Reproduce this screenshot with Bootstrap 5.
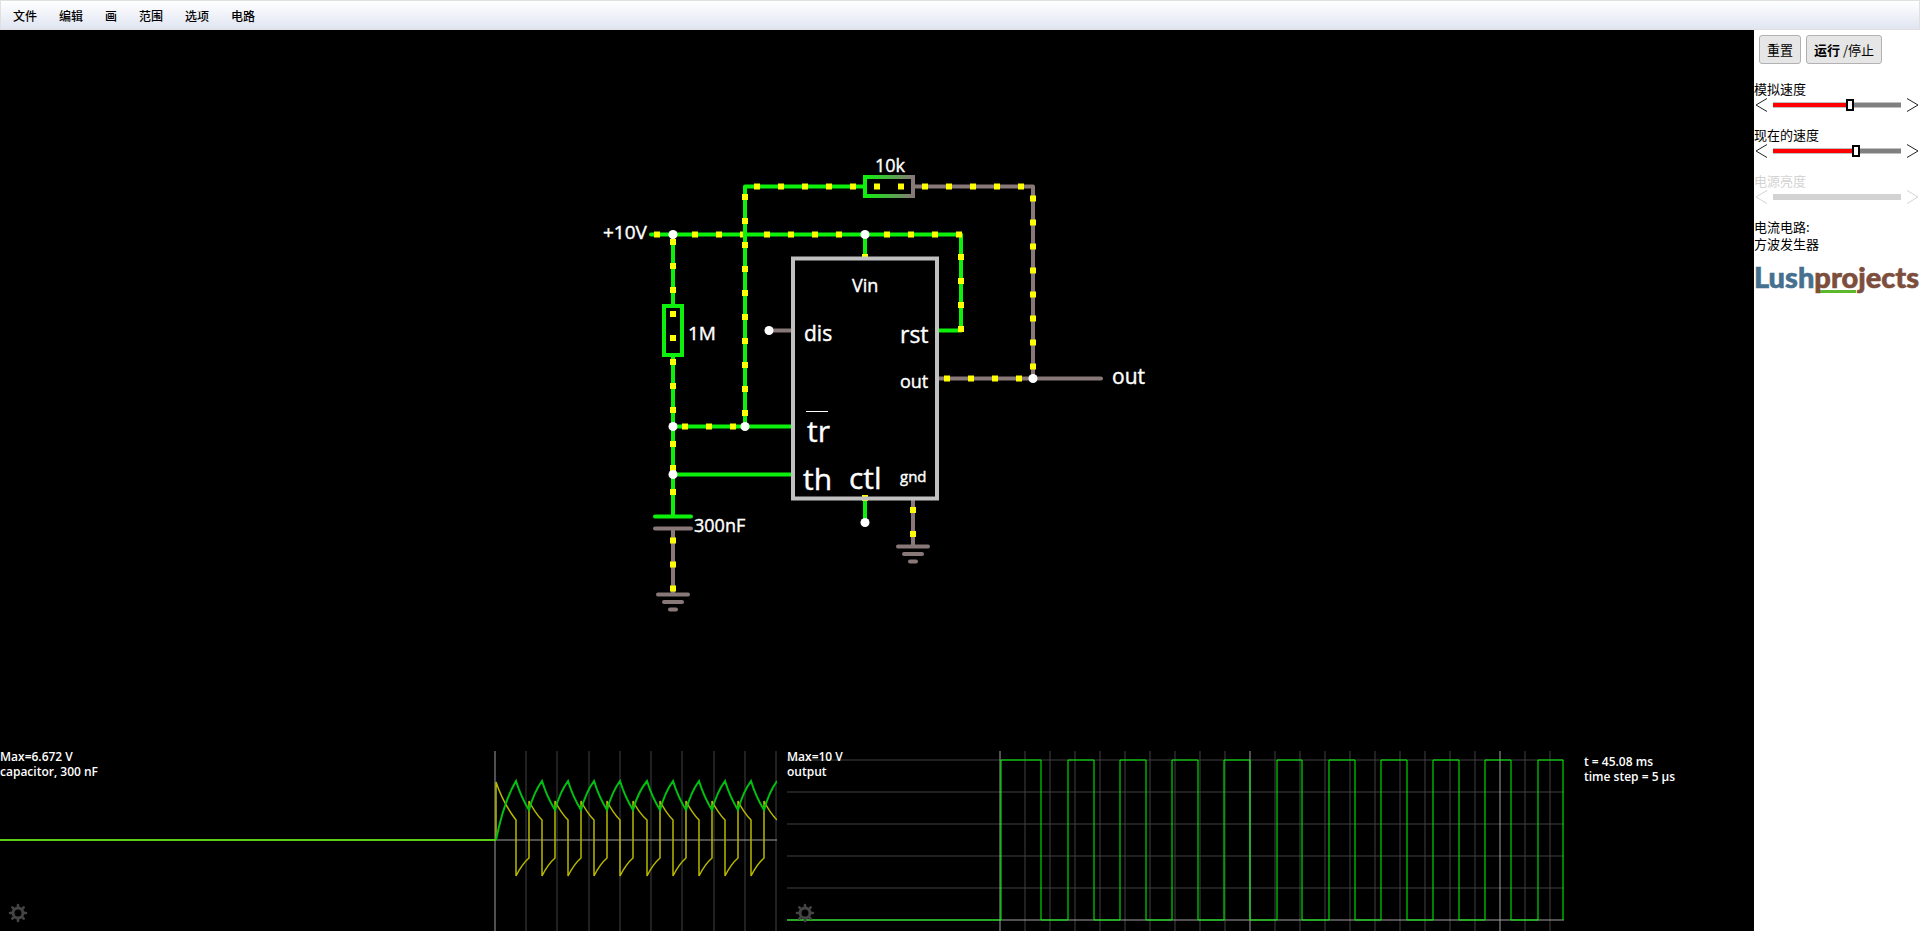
<!DOCTYPE html>
<html lang="zh-CN">
<head>
<meta charset="utf-8">
<meta name="viewport" content="width=device-width, initial-scale=1">
<title>方波发生器</title>
<link href="https://cdn.jsdelivr.net/npm/bootstrap@5.3.0/dist/css/bootstrap.min.css" rel="stylesheet">
<style>
  body { font-family: "Open Sans", "Noto Sans CJK SC", sans-serif; font-size: 13px; line-height: 17px; color: #000; }
  .menubar { height: 30px; padding: 2px 1px 0; border: 1px solid #e0e0e0; background: linear-gradient(#fff, #e0e5f1); }
  .menubar a { padding: 0 11px; font-family: "Noto Sans CJK SC", sans-serif; font-size: 12px; font-weight: 500; line-height: 26px; color: #000; }
  .stage { min-width: 0; }
  .scopes { display: grid; grid-template-columns: 1fr 1fr 180px; column-gap: 10px; height: 180px; font-size: 12px; line-height: 15px; font-weight: 600; color: #fff; }
  .scope-label { top: -2px; left: 0; }
  .timing { padding: 3px 0 0 10px; }
  .tools { width: 166px; font-family: "Noto Sans CJK SC", sans-serif; }
  .tool-row { gap: 5px; padding: 5px 5px 16px; }
  .tool-btn { height: 29px; padding: 0 7px; border: 1px solid #b2b2b2; border-radius: 3px; background: #e6e6e6; font-size: 13px; line-height: 17px; color: #000; }
  .speed { height: 46px; }
  .speed label { height: 18px; }
  .step { width: 14px; height: 14px; }
  .speed svg { display: block; }
  input.track { -webkit-appearance: none; appearance: none; min-width: 0; height: 12px; margin: 0 5px; background: none; }
  .track::-webkit-slider-runnable-track { height: 6px; border-top: 1px solid #c0c0c0; border-bottom: 1px solid #c0c0c0; background: linear-gradient(to right, #f00 var(--fill), #808080 var(--fill)); background-clip: border-box; }
  .track::-webkit-slider-thumb { -webkit-appearance: none; width: 8px; height: 12px; margin-top: -4px; border: 2px solid #000; background: #fff; }
  .track:disabled::-webkit-slider-runnable-track { background: #d3d3d3; border-color: #d3d3d3; }
  .track:disabled::-webkit-slider-thumb { visibility: hidden; }
  .dim { color: #d3d3d3; }
  .brand-link { margin-top: 10px; }
  .circuit text { fill: #fff; stroke: #fff; stroke-width: .4; font-size: 18px; }
  .circuit .t15 { font-size: 15px; }
  .circuit .t19 { font-size: 19px; }
  .circuit .t21 { font-size: 21px; }
  .circuit .t23 { font-size: 23px; }
  .circuit .t30 { font-size: 30px; }
  .wire { fill: none; stroke-width: 4; stroke-linecap: round; stroke-linejoin: round; }
  .hot { stroke: #0cf00c; }
  .cold { stroke: #887878; }
  .scope path { fill: none; }
  .minor { stroke: #404040; }
  .major { stroke: #a0a0a0; }
</style>
</head>
<body class="vh-100 d-flex flex-column overflow-hidden">
<nav class="menubar d-flex align-items-center flex-shrink-0" aria-label="主菜单">
  <a class="text-decoration-none" href="#">文件</a>
  <a class="text-decoration-none" href="#">编辑</a>
  <a class="text-decoration-none" href="#">画</a>
  <a class="text-decoration-none" href="#">范围</a>
  <a class="text-decoration-none" href="#">选项</a>
  <a class="text-decoration-none" href="#">电路</a>
</nav>
<div class="d-flex flex-grow-1">
  <main class="stage bg-black flex-grow-1 d-flex flex-column">
    <div class="flex-grow-1 d-flex align-items-center justify-content-center">
      <svg class="circuit" width="560" height="481" viewBox="597 150 560 481">
        <defs>
          <linearGradient id="drop" gradientUnits="userSpaceOnUse" x1="865" y1="0" x2="913" y2="0"><stop offset="0" stop-color="#0cf00c"/><stop offset="1" stop-color="#887878"/></linearGradient>
        </defs>
        <!-- supply rail and timing column -->
        <path class="wire hot" d="M651 234.500H961V330.500H939M865 234.500V258M673 234.500V306M673 356V516M745 426.500V186.500H865M673 426.500H791M673 474.500H791M865 522V500M655 516.500H691"/>
        <path class="wire cold" d="M913 186.500H1033V378.500M939 378.500H1101M769 330.500H791M913 500V546M655 528.500H691M673 528.500V594"/>
        <path class="wire cold" d="M658 594.500H688M664 602H682M670 609.500H676M898 546.500H928M904 554H922M910 561.500H916"/>
        <g id="dots" fill="#ff0"></g>
        <path class="wire hot" d="M745 226V238"/>
        <rect x="664" y="306" width="18" height="49" fill="none" stroke="#0cf00c" stroke-width="4"/>
        <rect x="865" y="177" width="48" height="19" fill="none" stroke="url(#drop)" stroke-width="4"/>
        <rect x="793" y="258.500" width="144" height="240" fill="none" stroke="#c0c0c0" stroke-width="4"/>
        <g fill="#fff">
          <circle cx="673" cy="234.500" r="4.500"/><circle cx="865" cy="234.500" r="4.500"/><circle cx="769" cy="330.500" r="4.500"/>
          <circle cx="673" cy="426.500" r="4.500"/><circle cx="745" cy="426.500" r="4.500"/><circle cx="673" cy="474.500" r="4.500"/>
          <circle cx="865" cy="522.500" r="4.500"/><circle cx="1033" cy="378.500" r="4.500"/>
        </g>
        <text class="t19" x="603" y="239">+10V</text>
        <text class="t19" x="688" y="340">1M</text>
        <text x="875" y="172">10k</text>
        <text x="694" y="532">300nF</text>
        <text x="852" y="292">Vin</text>
        <text class="t21" x="804" y="341">dis</text>
        <text class="t23" x="900" y="343">rst</text>
        <text x="900" y="388">out</text>
        <text class="t30" x="807" y="442">tr</text>
        <path d="M806 411.500H828" stroke="#fff"/>
        <text class="t30" x="803" y="490">th</text>
        <text class="t30" x="849" y="489">ctl</text>
        <text class="t15" x="900" y="482">gnd</text>
        <text class="t21" x="1112" y="384">out</text>
      </svg>
    </div>
    <div class="scopes">
      <section class="scope position-relative">
        <svg class="d-block w-100 h-100" viewBox="0 0 777 180" preserveAspectRatio="xMaxYMid slice">
          <path class="minor" d="M526 0V180M557 0V180M589 0V180M620 0V180M651 0V180M682 0V180M714 0V180M745 0V180M776 0V180"/>
          <path class="major" d="M495 0V180M0 89H777"/>
          <path id="current" stroke="#b8b800" stroke-width="1.500"/>
          <path id="voltage" stroke="#00c010" stroke-width="2"/>
          <path d="M0 89H496" stroke="#58d018" stroke-width="2"/>
          <use href="#gear"/>
        </svg>
        <div class="scope-label position-absolute">Max=6.672 V<br>capacitor, 300 nF</div>
      </section>
      <section class="scope position-relative">
        <svg class="d-block w-100 h-100" viewBox="0 0 777 180" preserveAspectRatio="xMaxYMid slice">
          <defs>
            <g id="gear" fill="none" stroke="#444" stroke-width="3">
              <circle cx="18" cy="162" r="5"/>
              <path d="M18 156V154M18 168V170M12 162H10M24 162H26M13.800 157.800L12.300 156.300M22.200 157.800L23.700 156.300M13.800 166.200L12.300 167.700M22.200 166.200L23.700 167.700" stroke-width="2.600" stroke-linecap="round"/>
            </g>
          </defs>
          <path class="minor" id="grid"/>
          <path class="major" d="M213 0V180M463 0V180M713 0V180M0 169H777"/>
          <path id="output" stroke="#0f0"/>
          <use href="#gear"/>
        </svg>
        <div class="scope-label position-absolute">Max=10 V<br>output</div>
      </section>
      <div class="timing">t = 45.08 ms<br>time step = 5 µs</div>
    </div>
  </main>
  <aside class="tools bg-white flex-shrink-0">
    <div class="tool-row d-flex">
      <button type="button" class="tool-btn">重置</button>
      <button type="button" class="tool-btn"><b>运行</b> /停止</button>
    </div>
    <div class="speed">
      <label class="d-block" for="sim">模拟速度</label>
      <div class="d-flex align-items-center">
        <button type="button" class="step btn p-0 border-0" aria-label="减"><svg width="14" height="14" fill="none" stroke="#222"><path d="M13 .5L2 7l11 6.500"/></svg></button>
        <input class="track flex-grow-1" id="sim" type="range" min="0" max="120" value="73" style="--fill:60%">
        <button type="button" class="step btn p-0 border-0" aria-label="加"><svg width="14" height="14" fill="none" stroke="#222"><path d="M1 .5L12 7L1 13.500"/></svg></button>
      </div>
    </div>
    <div class="speed">
      <label class="d-block" for="cur">现在的速度</label>
      <div class="d-flex align-items-center">
        <button type="button" class="step btn p-0 border-0" aria-label="减"><svg width="14" height="14" fill="none" stroke="#222"><path d="M13 .5L2 7l11 6.500"/></svg></button>
        <input class="track flex-grow-1" id="cur" type="range" min="0" max="120" value="79" style="--fill:65%">
        <button type="button" class="step btn p-0 border-0" aria-label="加"><svg width="14" height="14" fill="none" stroke="#222"><path d="M1 .5L12 7L1 13.500"/></svg></button>
      </div>
    </div>
    <div class="speed dim">
      <label class="d-block" for="pow">电源亮度</label>
      <div class="d-flex align-items-center">
        <button type="button" class="step btn p-0 border-0" aria-label="减"><svg width="14" height="14" fill="none" stroke="#d3d3d3"><path d="M13 .5L2 7l11 6.500"/></svg></button>
        <input class="track flex-grow-1" id="pow" type="range" disabled>
        <button type="button" class="step btn p-0 border-0" aria-label="加"><svg width="14" height="14" fill="none" stroke="#d3d3d3"><path d="M1 .5L12 7L1 13.500"/></svg></button>
      </div>
    </div>
    <div>电流电路:<br>方波发生器</div>
    <a class="brand-link d-block" href="#" aria-label="Lushprojects">
      <svg class="d-block overflow-visible" width="166" height="44" font-family="Lato, sans-serif" font-weight="900" font-size="29">
        <path d="M64 29.500H102" stroke="#5cb82e" stroke-width="3"/>
        <text x="0" y="26" fill="#46708f" stroke="#46708f" stroke-width=".6">Lush<tspan fill="#7d4e3c" stroke="#7d4e3c">projects</tspan></text>
      </svg>
    </a>
  </aside>
</div>
<script src="https://cdn.jsdelivr.net/npm/bootstrap@5.3.0/dist/js/bootstrap.bundle.min.js"></script>
<script>
  // Charge dots, one every 24 units: [x, y, count, direction]
  const runs = [
    [657, 234.5, 1, 'h'], [695, 234.5, 7, 'h'], [887, 234.5, 4, 'h'], [961, 257, 4, 'v'],
    [865, 257, 1, 'v'], [757, 186.5, 12, 'h'], [1033, 198.5, 8, 'v'], [745, 197, 10, 'v'],
    [673, 242, 8, 'v'], [685, 426.5, 3, 'h'], [673, 444, 3, 'v'], [673, 540.5, 3, 'v'],
    [947, 378.5, 4, 'h'], [865, 498, 1, 'v'], [913, 510, 2, 'v']
  ];
  document.getElementById('dots').innerHTML = runs.map(([x, y, n, dir]) =>
    Array.from({ length: n }, (_, i) => {
      const cx = dir === 'h' ? x + 24 * i : x, cy = dir === 'v' ? y + 24 * i : y;
      return `<rect x="${cx - 3}" y="${cy - 3}" width="6" height="6"/>`;
    }).join('')).join('');

  // Capacitor voltage and current, charging and discharging in turn
  let volts = 'M496 89Q504 50 516 30', amps = 'M496 89V31Q503 52 516 69';
  for (let i = 0; i < 10; i++) {
    const a = Math.round(516 + 26.1 * i), b = a + 13, c = Math.round(516 + 26.1 * (i + 1));
    volts += `Q${a + 5} 46 ${b} 59Q${b + 5} 41 ${c} 30`;
    amps += `V125Q${a + 6} 113 ${b} 107V50Q${b + 6} 62 ${c} 69`;
  }
  document.getElementById('voltage').setAttribute('d', volts);
  document.getElementById('current').setAttribute('d', amps);

  // Output scope grid and square wave
  let grid = 'M0 9H777M0 41H777M0 73H777M0 105H777M0 137H777';
  for (let x = 213; x < 777; x += 25) if ((x - 213) % 250) grid += `M${x} 0V180`;
  document.getElementById('grid').setAttribute('d', grid);
  const edges = [214, 254, 281, 307, 333, 359, 385, 411, 437, 463, 490, 515, 542, 568, 594, 620, 646, 672, 698, 724, 751, 776];
  document.getElementById('output').setAttribute('d', 'M0 169' + edges.map((x, i) => `H${x}V${i % 2 ? 169 : 9}`).join(''));
</script>
</body>
</html>
